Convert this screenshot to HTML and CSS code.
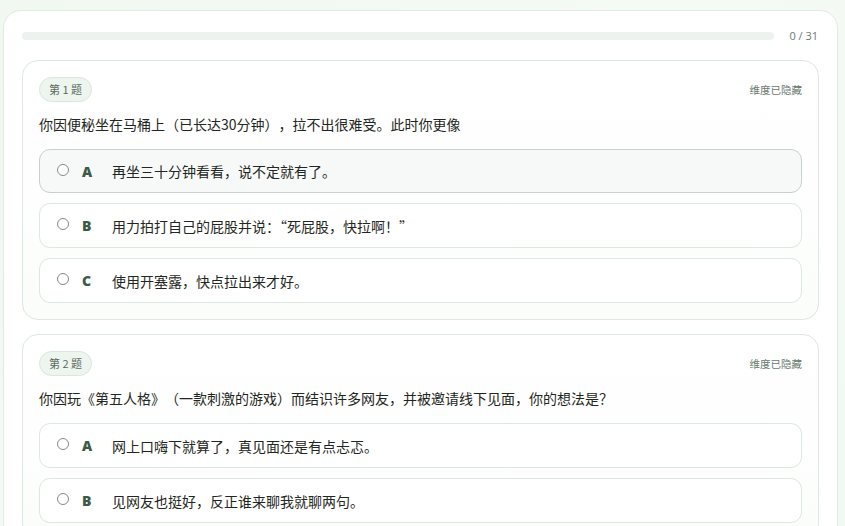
FILE: index.html
```html
<!DOCTYPE html>
<html lang="zh-CN">
<head>
<meta charset="utf-8">
<title>测试</title>
<link rel="stylesheet" href="styles.css">
</head>
<body>
<div class="shell">
  <div class="progress-row">
    <div class="progress-track"><div class="progress-fill" style="width:0%"></div></div>
    <div class="progress-text">0 / 31</div>
  </div>

  <div class="qcard">
    <div class="qhead">
      <span class="badge">第 1 题</span>
      <span class="dim">维度已隐藏</span>
    </div>
    <div class="qtext">你因便秘坐在马桶上（已长达30分钟），拉不出很难受。此时你更像</div>
    <div class="opts">
      <label class="opt opt-hover"><span class="radio"></span><span class="letter">A</span><span class="otext">再坐三十分钟看看，说不定就有了。</span></label>
      <label class="opt"><span class="radio"></span><span class="letter">B</span><span class="otext">用力拍打自己的屁股并说：“死屁股，快拉啊！”</span></label>
      <label class="opt"><span class="radio"></span><span class="letter">C</span><span class="otext">使用开塞露，快点拉出来才好。</span></label>
    </div>
  </div>

  <div class="qcard">
    <div class="qhead">
      <span class="badge">第 2 题</span>
      <span class="dim">维度已隐藏</span>
    </div>
    <div class="qtext">你因玩《第五人格》（一款刺激的游戏）而结识许多网友，并被邀请线下见面，你的想法是？</div>
    <div class="opts">
      <label class="opt"><span class="radio"></span><span class="letter">A</span><span class="otext">网上口嗨下就算了，真见面还是有点忐忑。</span></label>
      <label class="opt"><span class="radio"></span><span class="letter">B</span><span class="otext">见网友也挺好，反正谁来聊我就聊两句。</span></label>
    </div>
  </div>
</div>
</body>
</html>
```

FILE: styles.css
```css
* { box-sizing: border-box; }

html, body {
  margin: 0;
  height: 100%;
}

body {
  background: linear-gradient(135deg, #f1f8f0 0%, #f5faf5 50%, #f2f8f2 100%);
  font-family: "Noto Sans CJK SC", "Noto Sans", sans-serif;
  color: #1f2722;
  padding: 10px 7px 0 3px;
  overflow: hidden;
}

.shell {
  background: #ffffff;
  border: 1px solid #e0ebe2;
  border-radius: 18px;
  padding: 17px 18px 20px 18px;
  display: flex;
  flex-direction: column;
  gap: 14px;
}

.progress-row {
  display: flex;
  align-items: center;
  gap: 15px;
  height: 16px;
  margin-bottom: 2px;
}

.progress-track {
  flex: 1;
  height: 8px;
  background: #edf2ef;
  border-radius: 999px;
  overflow: hidden;
}

.progress-fill {
  height: 100%;
  background: #6aa57a;
}

.progress-text {
  font-family: "Open Sans", "Noto Sans", sans-serif;
  font-size: 11px;
  line-height: 16px;
  color: #6a7a70;
  padding-right: 1px;
}

.qcard {
  background: linear-gradient(180deg, #ffffff 0%, #fbfdfb 100%);
  border: 1px solid #dce8e0;
  border-radius: 16px;
  padding: 16px;
}

.qhead {
  display: flex;
  align-items: center;
  justify-content: space-between;
  height: 25px;
}

.badge {
  display: inline-flex;
  align-items: center;
  height: 25px;
  padding: 0 9px;
  border-radius: 999px;
  background: #eef5ef;
  border: 1px solid #d9e7dc;
  font-size: 11px;
  color: #5a6b60;
  line-height: 1;
}

.dim {
  font-size: 10.5px;
  color: #6a7a70;
}

.qtext {
  margin-top: 12px;
  font-size: 14px;
  line-height: 20px;
  color: #1f2722;
  text-spacing-trim: space-all;
}

.opts {
  margin-top: 15px;
  display: flex;
  flex-direction: column;
  gap: 10px;
}

.opt {
  display: flex;
  align-items: center;
  height: 45px;
  padding: 0 16px 0 17px;
  border: 1px solid #dce8e1;
  border-radius: 11px;
  background: #ffffff;
}

.opt-hover {
  background: #f7f9f8;
  border-color: #c6d2cb;
  height: 44px;
}

.radio {
  width: 12px;
  height: 12px;
  border: 1px solid #858a87;
  border-radius: 50%;
  background: #fff;
  flex: none;
  margin-top: -3px;
}

.letter {
  width: 18px;
  margin-left: 13px;
  font-family: "Open Sans", "Noto Sans", sans-serif;
  font-weight: 800;
  font-size: 14px;
  color: #3c5a47;
  flex: none;
}

.otext {
  margin-left: 12px;
  font-size: 14px;
  line-height: 20px;
  color: #1f2722;
}
```
